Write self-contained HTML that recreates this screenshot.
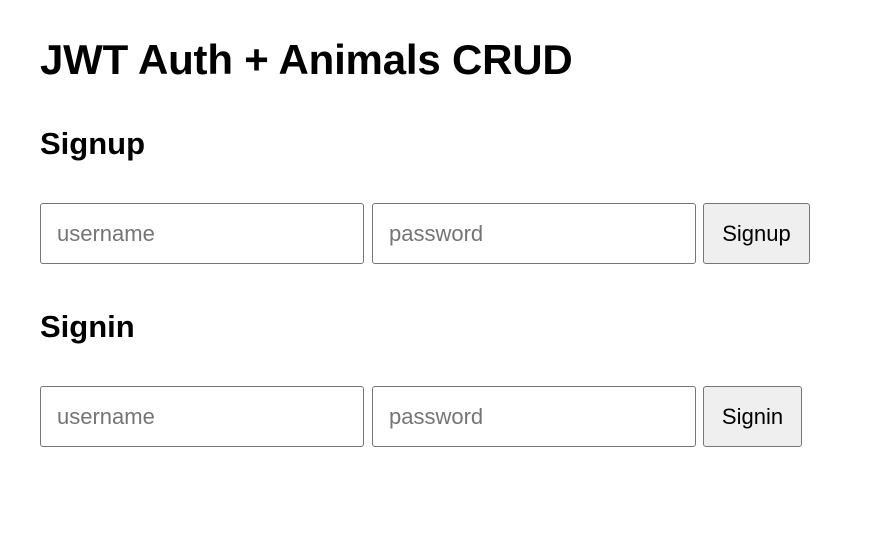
<!DOCTYPE html>
<html><head><style>
body{margin:0;background:#fff;font-family:"Liberation Sans",sans-serif;}
h1{position:absolute;left:40px;top:37px;margin:0;font-size:42px;font-weight:bold;line-height:46px;letter-spacing:-0.2px;}
h2{position:absolute;left:40px;margin:0;font-size:31px;font-weight:bold;line-height:36px;}
.in{position:absolute;height:59px;width:322px;border:1px solid #767676;border-radius:3px;box-sizing:content-box;}
.in span{position:absolute;left:16px;top:17px;font-size:22px;color:#757575;line-height:26px;}
.bt{position:absolute;height:59px;border:1px solid #767676;border-radius:3px;background:#efefef;font-size:22px;line-height:59px;text-align:center;color:#000;}
</style></head><body>
<h1>JWT Auth + Animals CRUD</h1>
<h2 style="top:126px">Signup</h2>
<div class="in" style="left:40px;top:203px"><span>username</span></div>
<div class="in" style="left:372px;top:203px"><span>password</span></div>
<div class="bt" style="left:703px;top:203px;width:105px">Signup</div>
<h2 style="top:309px">Signin</h2>
<div class="in" style="left:40px;top:386px"><span>username</span></div>
<div class="in" style="left:372px;top:386px"><span>password</span></div>
<div class="bt" style="left:703px;top:386px;width:97px">Signin</div>
</body></html>
